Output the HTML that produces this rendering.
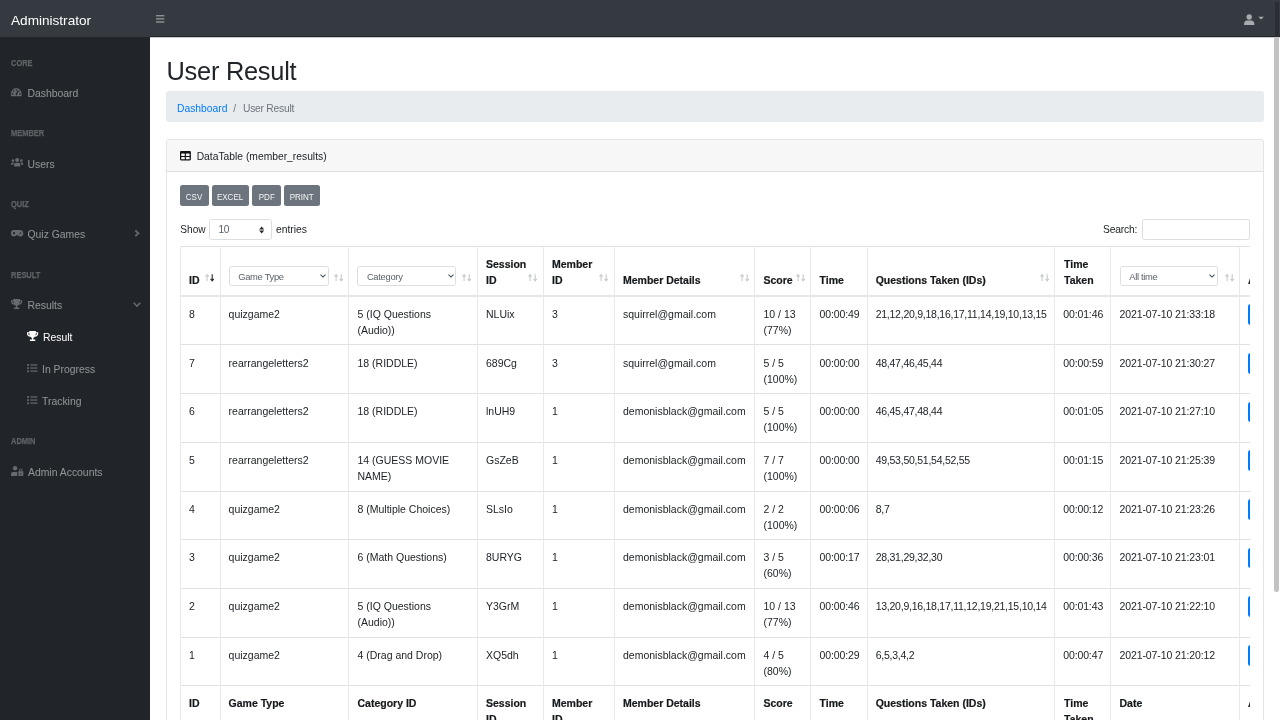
<!DOCTYPE html><html><head><meta charset="utf-8"><style>
*{box-sizing:border-box}
html,body{margin:0;padding:0;width:1280px;height:720px;overflow:hidden;background:#fff;font-family:"Liberation Sans",sans-serif;color:#212529}body{will-change:transform;position:relative}
.a{position:absolute;white-space:nowrap}
#nav{position:absolute;left:0;top:0;width:1280px;height:37px;background:#343a40}
#navline{position:absolute;left:150px;top:35.8px;width:1130px;height:1.3px;background:#212529}#navsh{position:absolute;left:150px;top:37px;width:1130px;height:1.3px;background:rgba(33,37,41,.25)}
#side{position:absolute;left:0;top:37.3px;width:150px;height:683px;background:#212529}
.sh{font-size:8.7px;font-weight:bold;color:#606366;-webkit-text-stroke:.25px #606366;line-height:12px;transform:scaleX(.86);transform-origin:0 0}
.sl{font-size:10.4px;color:rgba(255,255,255,.5);line-height:16px}
svg{position:absolute;overflow:visible}

.t{font-size:10.5px;line-height:16px;color:#212529}
.th{font-size:10.5px;line-height:16px;color:#16191c;font-weight:bold;-webkit-text-stroke:.2px #16191c}
.hl{position:absolute;background:#e8e9eb;height:1px}
.vl{position:absolute;background:#e8e9eb;width:1px}
.btn{position:absolute;background:#6c757d;border-radius:2.5px;color:#fff;line-height:21px;text-align:center}.btn span{display:inline-block;font-size:9.8px;line-height:20.6px;vertical-align:top;position:relative;top:1.3px;transform:scaleX(.82);margin:0 -10px;color:#f4f5f6}
.sel{position:absolute;border:1px solid #dcdfe2;border-radius:2.6px;background:#fff;height:20px;font-size:9.4px;line-height:18.5px;color:#5b6269;padding-left:8.5px;letter-spacing:-.3px}
</style></head><body><div id="nav"></div><div id="navline"></div><div id="navsh"></div><div id="side"></div>
<div class="a " style="left:11.00px;top:12.79px;font-size:13.6px;line-height:16px;color:#fff">Administrator</div>
<svg style="left:155px;top:14px" width="10" height="10" viewBox="0 0 10 10"><g fill="#a3a6a9"><rect x="1" y="1.2" width="8.3" height="1.15"/><rect x="1" y="4.3" width="8.3" height="1.15"/><rect x="1" y="7.4" width="8.3" height="1.15"/></g></svg>
<svg style="left:1243px;top:12px" width="24" height="16" viewBox="0 0 24 16"><g fill="#a8abae"><circle cx="6.2" cy="5" r="2.7"/><path d="M1 13 Q1 8.4 4 8.4 H8.4 Q11.4 8.4 11.4 13 Z"/><path d="M15.3 4.8 L20.9 4.8 L18.1 7.4 Z"/></g></svg>
<div class="a" style="left:1274.5px;top:2px;width:4.5px;height:35px;background:#2a2e33"></div>
<div class="a" style="left:1274.2px;top:38px;width:4.5px;height:554px;background:#c2c2c2;border-radius:0 0 2.2px 2.2px"></div>
<div class="a sh" style="left:11.00px;top:56.59px;">CORE</div>
<div class="a sh" style="left:11.00px;top:127.19px;">MEMBER</div>
<div class="a sh" style="left:11.00px;top:197.89px;">QUIZ</div>
<div class="a sh" style="left:11.00px;top:268.59px;">RESULT</div>
<div class="a sh" style="left:11.00px;top:434.99px;">ADMIN</div>
<div class="a sl" style="left:27.50px;top:85.80px;">Dashboard</div>
<div class="a sl" style="left:27.50px;top:156.50px;">Users</div>
<div class="a sl" style="left:27.50px;top:227.10px;">Quiz Games</div>
<div class="a sl" style="left:27.50px;top:297.80px;">Results</div>
<div class="a sl" style="left:43.00px;top:329.80px;color:#fff">Result</div>
<div class="a sl" style="left:42.00px;top:361.80px;">In Progress</div>
<div class="a sl" style="left:42.00px;top:393.80px;">Tracking</div>
<div class="a sl" style="left:28.00px;top:464.50px;">Admin Accounts</div>
<svg style="left:0;top:0" width="1" height="1"></svg>
<svg style="left:11px;top:87.8px" width="10.6" height="8.4" viewBox="0 0 10.6 8.4"><path d="M0 8.3 V5.6 A5.3 5.5 0 0 1 10.6 5.6 V8.3 Z" fill="#66696d"/><g fill="#212529"><circle cx="5.3" cy="1.9" r=".8"/><circle cx="2.6" cy="3.1" r=".8"/><circle cx="1.7" cy="5.9" r=".8"/><circle cx="8.9" cy="5.9" r=".8"/><circle cx="8" cy="3.1" r=".8"/><path d="M6.6 2.4 L7.5 2.8 L6 6.9 A1.1 1.1 0 0 1 4.4 6.6 Z"/></g></svg>
<svg style="left:10.7px;top:158.4px" width="12.4" height="8.8" viewBox="0 0 12.4 8.8"><g fill="#66696d"><circle cx="6.2" cy="2.1" r="2"/><circle cx="2" cy="2.6" r="1.3"/><circle cx="10.4" cy="2.6" r="1.3"/><path d="M3.1 8.6 V6.8 Q3.1 4.7 5 4.7 H7.4 Q9.3 4.7 9.3 6.8 V8.6 Z"/><path d="M0 6.4 Q0 4.6 1.6 4.6 H3.1 Q2.3 5.3 2.3 6.8 H0 Z"/><path d="M12.4 6.4 Q12.4 4.6 10.8 4.6 H9.3 Q10.1 5.3 10.1 6.8 H12.4 Z"/></g></svg>
<svg style="left:10.9px;top:230.3px" width="12.2" height="6.6" viewBox="0 0 12.2 6.6"><path d="M3.1 0 H9.1 A3.1 3.2 0 0 1 9.1 6.5 Q7.6 6.5 6.1 5.1 Q4.6 6.5 3.1 6.5 A3.1 3.2 0 0 1 3.1 0 Z" fill="#66696d"/><circle cx="3" cy="3.2" r="1.1" fill="#212529"/><path d="M8.2 4.6 L10.2 1.8" stroke="#212529" stroke-width="0.9"/></svg>
<svg style="left:10.75px;top:299px" width="11.2" height="10.2" viewBox="0 0 11.2 10.2"><path d="M2.3 0 H8.9 V1.2 H11.2 V2.4 Q11.2 5.2 7.8 5.8 Q7 6.8 6.3 7 V8.6 H8.3 V10.1 H2.9 V8.6 H4.9 V7 Q4.2 6.8 3.4 5.8 Q0 5.2 0 2.4 V1.2 H2.3 Z" fill="#66696d"/><g fill="#212529"><path d="M1.2 2.2 H2.3 Q2.4 3.6 2.9 4.5 Q1.3 4 1.2 2.2 Z"/><path d="M10 2.2 H8.9 Q8.8 3.6 8.3 4.5 Q9.9 4 10 2.2 Z"/></g></svg>
<svg style="left:26.75px;top:330.8px" width="11.2" height="10.2" viewBox="0 0 11.2 10.2"><path d="M2.3 0 H8.9 V1.2 H11.2 V2.4 Q11.2 5.2 7.8 5.8 Q7 6.8 6.3 7 V8.6 H8.3 V10.1 H2.9 V8.6 H4.9 V7 Q4.2 6.8 3.4 5.8 Q0 5.2 0 2.4 V1.2 H2.3 Z" fill="#ffffff"/><g fill="#212529"><path d="M1.2 2.2 H2.3 Q2.4 3.6 2.9 4.5 Q1.3 4 1.2 2.2 Z"/><path d="M10 2.2 H8.9 Q8.8 3.6 8.3 4.5 Q9.9 4 10 2.2 Z"/></g></svg>
<svg style="left:26.8px;top:364.0px" width="10.4" height="8.2" viewBox="0 0 10.4 8.2"><g fill="#595c60"><rect x="0" y="0" width="2" height="2"/><rect x="0" y="3.1" width="2" height="2"/><rect x="0" y="6.2" width="2" height="2"/><rect x="3.2" y="0.2" width="7.2" height="1.5"/><rect x="3.2" y="3.3" width="7.2" height="1.5"/><rect x="3.2" y="6.4" width="7.2" height="1.5"/></g></svg>
<svg style="left:26.8px;top:396.0px" width="10.4" height="8.2" viewBox="0 0 10.4 8.2"><g fill="#595c60"><rect x="0" y="0" width="2" height="2"/><rect x="0" y="3.1" width="2" height="2"/><rect x="0" y="6.2" width="2" height="2"/><rect x="3.2" y="0.2" width="7.2" height="1.5"/><rect x="3.2" y="3.3" width="7.2" height="1.5"/><rect x="3.2" y="6.4" width="7.2" height="1.5"/></g></svg>
<svg style="left:10.75px;top:465.7px" width="12.4" height="10" viewBox="0 0 12.4 10"><g fill="#66696d"><circle cx="4.1" cy="2.3" r="2.2"/><path d="M0 9.9 V7.7 Q0 6 1.8 6 H6.2 V9.9 Z"/><path d="M7.3 5.2 H12.3 V9.9 H7.3 Z"/><path d="M8.2 5.3 V4 A1.6 1.6 0 0 1 11.4 4 V5.3 H10.5 V4 A0.7 0.7 0 0 0 9.1 4 V5.3 Z"/></g><rect x="9.4" y="7" width=".9" height="1.5" fill="#212529"/></svg>
<svg style="left:133.5px;top:229px" width="6" height="8.5" viewBox="0 0 6 8.5"><path d="M1.3 1.3 L4.4 4.25 L1.3 7.2" fill="none" stroke="#66696d" stroke-width="1.8"/></svg>
<svg style="left:132.5px;top:302px" width="8" height="5.5" viewBox="0 0 8 5.5"><path d="M0.7 0.8 L4 4.2 L7.3 0.8" fill="none" stroke="#66696d" stroke-width="1.6"/></svg>
<div class="a " style="left:166.50px;top:56.40px;font-size:25.4px;line-height:30px;color:#212529;letter-spacing:-.25px">User Result</div>
<div class="a" style="left:166px;top:91px;width:1098px;height:31px;background:#e9ecef;border-radius:2.7px"></div>
<div class="a " style="left:177.00px;top:100.63px;font-size:10.3px;line-height:16px;color:#007bff">Dashboard</div>
<div class="a " style="left:233.20px;top:100.63px;font-size:10.3px;line-height:16px;color:#6c757d">/</div>
<div class="a " style="left:243.00px;top:100.63px;font-size:10.3px;line-height:16px;color:#6c757d;letter-spacing:-.25px">User Result</div>
<div class="a" style="left:166px;top:139px;width:1098px;height:600px;border:1px solid rgba(0,0,0,.1);border-radius:2.7px"></div>
<div class="a" style="left:167px;top:140px;width:1096px;height:32px;background:#f7f7f7;border-bottom:1px solid #dfdfdf;border-radius:2px 2px 0 0"></div>
<svg style="left:180px;top:151.2px" width="11" height="9.5" viewBox="0 0 11 9.5"><rect x="0" y="0" width="10.9" height="9.4" rx="1.1" fill="#111315"/><g fill="#f7f7f7"><rect x="1.2" y="2.6" width="3.6" height="2.4" rx=".4"/><rect x="5.9" y="2.6" width="3.7" height="2.4" rx=".4"/><rect x="1.2" y="6" width="3.6" height="2.3" rx=".4"/><rect x="5.9" y="6" width="3.7" height="2.3" rx=".4"/></g></svg>
<div class="a " style="left:196.70px;top:148.63px;font-size:10.3px;line-height:16px;color:#212529">DataTable (member_results)</div>
<div class="btn" style="left:180.1px;top:185.3px;width:28.5px;height:20.6px"><span>CSV</span></div>
<div class="btn" style="left:211.8px;top:185.3px;width:36.9px;height:20.6px"><span>EXCEL</span></div>
<div class="btn" style="left:252.2px;top:185.3px;width:28.4px;height:20.6px"><span>PDF</span></div>
<div class="btn" style="left:283.6px;top:185.3px;width:36.4px;height:20.6px"><span>PRINT</span></div>
<div class="a " style="left:180.30px;top:222.10px;font-size:10.1px;line-height:16px;color:#212529">Show</div>
<div class="sel" style="left:209.2px;top:219.3px;width:63.2px;height:20.3px;padding-left:8.3px;font-size:10.2px;line-height:20.5px;color:#5a6168">10</div>
<svg style="left:259.2px;top:226px" width="5.4" height="8" viewBox="0 0 5.4 8"><path d="M0.2 3.5 L2.7 0.6 L5.2 3.5 Z M0.2 4.6 L2.7 7.5 L5.2 4.6 Z" fill="#212529"/></svg>
<div class="a " style="left:276.00px;top:222.03px;font-size:10.3px;line-height:16px;color:#212529">entries</div>
<div class="a " style="left:1103.00px;top:222.03px;font-size:10.3px;letter-spacing:-.2px;line-height:16px;color:#212529">Search:</div>
<div class="sel" style="left:1142.3px;top:219px;width:107.5px;height:20.6px"></div>
<div class="a" style="left:180px;top:240px;width:1070px;height:480px;overflow:hidden">
<div class="hl" style="left:0px;top:5.50px;width:1070px;height:1px;background:#dee2e6"></div>
<div class="hl" style="left:0px;top:54.50px;width:1070px;height:2px;background:#e4e6e9"></div>
<div class="hl" style="left:0px;top:104.00px;width:1070px;height:1px;background:#dee2e6"></div>
<div class="hl" style="left:0px;top:153.00px;width:1070px;height:1px;background:#dee2e6"></div>
<div class="hl" style="left:0px;top:202.00px;width:1070px;height:1px;background:#dee2e6"></div>
<div class="hl" style="left:0px;top:251.00px;width:1070px;height:1px;background:#dee2e6"></div>
<div class="hl" style="left:0px;top:299.00px;width:1070px;height:1px;background:#dee2e6"></div>
<div class="hl" style="left:0px;top:348.00px;width:1070px;height:1px;background:#dee2e6"></div>
<div class="hl" style="left:0px;top:397.00px;width:1070px;height:1px;background:#dee2e6"></div>
<div class="hl" style="left:0px;top:445.00px;width:1070px;height:1px;background:#dee2e6"></div>
<div class="vl" style="left:0.00px;top:6px;height:480px"></div>
<div class="vl" style="left:39.70px;top:6px;height:480px"></div>
<div class="vl" style="left:168.40px;top:6px;height:480px"></div>
<div class="vl" style="left:297.10px;top:6px;height:480px"></div>
<div class="vl" style="left:362.70px;top:6px;height:480px"></div>
<div class="vl" style="left:433.90px;top:6px;height:480px"></div>
<div class="vl" style="left:574.40px;top:6px;height:480px"></div>
<div class="vl" style="left:630.20px;top:6px;height:480px"></div>
<div class="vl" style="left:686.50px;top:6px;height:480px"></div>
<div class="vl" style="left:874.00px;top:6px;height:480px"></div>
<div class="vl" style="left:930.00px;top:6px;height:480px"></div>
<div class="vl" style="left:1058.70px;top:6px;height:480px"></div>
<div class="a th" style="left:9.00px;top:31.56px;">ID</div>
<div class="a th" style="left:306.00px;top:15.56px;">Session</div>
<div class="a th" style="left:306.00px;top:31.56px;">ID</div>
<div class="a th" style="left:372.00px;top:15.56px;">Member</div>
<div class="a th" style="left:372.00px;top:31.56px;">ID</div>
<div class="a th" style="left:443.00px;top:31.56px;">Member Details</div>
<div class="a th" style="left:583.50px;top:31.56px;">Score</div>
<div class="a th" style="left:639.50px;top:31.56px;">Time</div>
<div class="a th" style="left:695.70px;top:31.56px;">Questions Taken (IDs)</div>
<div class="a th" style="left:884.00px;top:15.56px;">Time</div>
<div class="a th" style="left:884.00px;top:31.56px;">Taken</div>
<div class="a th" style="left:1068.00px;top:31.56px;">Action</div>
<div class="sel" style="left:48.7px;top:26.3px;width:99.9px;height:20.1px;line-height:20.8px">Game Type</div>
<svg style="left:139.6px;top:34.3px" width="6" height="4" viewBox="0 0 6 4"><path d="M0.5 0.6 L3 3.1 L5.5 0.6" fill="none" stroke="#495057" stroke-width="1.05"/></svg>
<div class="sel" style="left:177.4px;top:26.3px;width:99.1px;height:20.1px;line-height:20.8px">Category</div>
<svg style="left:267.5px;top:34.3px" width="6" height="4" viewBox="0 0 6 4"><path d="M0.5 0.6 L3 3.1 L5.5 0.6" fill="none" stroke="#495057" stroke-width="1.05"/></svg>
<div class="sel" style="left:939.7px;top:26.3px;width:98.3px;height:20.1px;line-height:20.8px">All time</div>
<svg style="left:1029.0px;top:34.3px" width="6" height="4" viewBox="0 0 6 4"><path d="M0.5 0.6 L3 3.1 L5.5 0.6" fill="none" stroke="#495057" stroke-width="1.05"/></svg>
<svg style="left:24.8px;top:33.6px" width="10" height="8" viewBox="0 0 10 8"><path d="M2.1 7.1 V1.2 M0.5 2.7 L2.1 0.7 L3.7 2.7" fill="none" stroke="#c9cbcd" stroke-width="1.1"/><path d="M7.2 0.3 V6.4 M5.6 4.9 L7.2 6.9 L8.8 4.9" fill="none" stroke="#2b2f33" stroke-width="1.15"/></svg>
<svg style="left:153.5px;top:33.6px" width="10" height="8" viewBox="0 0 10 8"><path d="M2.1 7.1 V1.2 M0.5 2.7 L2.1 0.7 L3.7 2.7" fill="none" stroke="#c9cbcd" stroke-width="1.1"/><path d="M7.2 0.3 V6.4 M5.6 4.9 L7.2 6.9 L8.8 4.9" fill="none" stroke="#c9cbcd" stroke-width="1.15"/></svg>
<svg style="left:281.8px;top:33.6px" width="10" height="8" viewBox="0 0 10 8"><path d="M2.1 7.1 V1.2 M0.5 2.7 L2.1 0.7 L3.7 2.7" fill="none" stroke="#c9cbcd" stroke-width="1.1"/><path d="M7.2 0.3 V6.4 M5.6 4.9 L7.2 6.9 L8.8 4.9" fill="none" stroke="#c9cbcd" stroke-width="1.15"/></svg>
<svg style="left:348.3px;top:33.6px" width="10" height="8" viewBox="0 0 10 8"><path d="M2.1 7.1 V1.2 M0.5 2.7 L2.1 0.7 L3.7 2.7" fill="none" stroke="#c9cbcd" stroke-width="1.1"/><path d="M7.2 0.3 V6.4 M5.6 4.9 L7.2 6.9 L8.8 4.9" fill="none" stroke="#c9cbcd" stroke-width="1.15"/></svg>
<svg style="left:419.0px;top:33.6px" width="10" height="8" viewBox="0 0 10 8"><path d="M2.1 7.1 V1.2 M0.5 2.7 L2.1 0.7 L3.7 2.7" fill="none" stroke="#c9cbcd" stroke-width="1.1"/><path d="M7.2 0.3 V6.4 M5.6 4.9 L7.2 6.9 L8.8 4.9" fill="none" stroke="#c9cbcd" stroke-width="1.15"/></svg>
<svg style="left:559.7px;top:33.6px" width="10" height="8" viewBox="0 0 10 8"><path d="M2.1 7.1 V1.2 M0.5 2.7 L2.1 0.7 L3.7 2.7" fill="none" stroke="#c9cbcd" stroke-width="1.1"/><path d="M7.2 0.3 V6.4 M5.6 4.9 L7.2 6.9 L8.8 4.9" fill="none" stroke="#c9cbcd" stroke-width="1.15"/></svg>
<svg style="left:616.0px;top:33.6px" width="10" height="8" viewBox="0 0 10 8"><path d="M2.1 7.1 V1.2 M0.5 2.7 L2.1 0.7 L3.7 2.7" fill="none" stroke="#c9cbcd" stroke-width="1.1"/><path d="M7.2 0.3 V6.4 M5.6 4.9 L7.2 6.9 L8.8 4.9" fill="none" stroke="#c9cbcd" stroke-width="1.15"/></svg>
<svg style="left:860.4px;top:33.6px" width="10" height="8" viewBox="0 0 10 8"><path d="M2.1 7.1 V1.2 M0.5 2.7 L2.1 0.7 L3.7 2.7" fill="none" stroke="#c9cbcd" stroke-width="1.1"/><path d="M7.2 0.3 V6.4 M5.6 4.9 L7.2 6.9 L8.8 4.9" fill="none" stroke="#c9cbcd" stroke-width="1.15"/></svg>
<svg style="left:1044.5px;top:33.6px" width="10" height="8" viewBox="0 0 10 8"><path d="M2.1 7.1 V1.2 M0.5 2.7 L2.1 0.7 L3.7 2.7" fill="none" stroke="#c9cbcd" stroke-width="1.1"/><path d="M7.2 0.3 V6.4 M5.6 4.9 L7.2 6.9 L8.8 4.9" fill="none" stroke="#c9cbcd" stroke-width="1.15"/></svg>
<div class="a t" style="left:9.00px;top:65.86px;">8</div>
<div class="a t" style="left:48.60px;top:65.86px;">quizgame2</div>
<div class="a t" style="left:177.50px;top:65.86px;">5 (IQ Questions</div>
<div class="a t" style="left:177.50px;top:81.86px;">(Audio))</div>
<div class="a t" style="left:306.00px;top:65.86px;">NLUix</div>
<div class="a t" style="left:372.00px;top:65.86px;">3</div>
<div class="a t" style="left:443.00px;top:65.86px;">squirrel@gmail.com</div>
<div class="a t" style="left:583.50px;top:65.86px;">10 / 13</div>
<div class="a t" style="left:583.50px;top:81.86px;">(77%)</div>
<div class="a t" style="left:639.50px;top:65.86px;letter-spacing:-.12px">00:00:49</div>
<div class="a t" style="left:695.70px;top:65.86px;letter-spacing:-.25px">21,12,20,9,18,16,17,11,14,19,10,13,15</div>
<div class="a t" style="left:883.20px;top:65.86px;letter-spacing:-.12px">00:01:46</div>
<div class="a t" style="left:939.50px;top:65.86px;letter-spacing:-.1px">2021-07-10 21:33:18</div>
<div class="a" style="left:1068px;top:64.20px;width:40px;height:20.8px;background:#007bff;border-radius:2.5px"></div>
<div class="a t" style="left:9.00px;top:114.53px;">7</div>
<div class="a t" style="left:48.60px;top:114.53px;">rearrangeletters2</div>
<div class="a t" style="left:177.50px;top:114.53px;">18 (RIDDLE)</div>
<div class="a t" style="left:306.00px;top:114.53px;">689Cg</div>
<div class="a t" style="left:372.00px;top:114.53px;">3</div>
<div class="a t" style="left:443.00px;top:114.53px;">squirrel@gmail.com</div>
<div class="a t" style="left:583.50px;top:114.53px;">5 / 5</div>
<div class="a t" style="left:583.50px;top:130.53px;">(100%)</div>
<div class="a t" style="left:639.50px;top:114.53px;letter-spacing:-.12px">00:00:00</div>
<div class="a t" style="left:695.70px;top:114.53px;letter-spacing:-.25px">48,47,46,45,44</div>
<div class="a t" style="left:883.20px;top:114.53px;letter-spacing:-.12px">00:00:59</div>
<div class="a t" style="left:939.50px;top:114.53px;letter-spacing:-.1px">2021-07-10 21:30:27</div>
<div class="a" style="left:1068px;top:112.87px;width:40px;height:20.8px;background:#007bff;border-radius:2.5px"></div>
<div class="a t" style="left:9.00px;top:163.20px;">6</div>
<div class="a t" style="left:48.60px;top:163.20px;">rearrangeletters2</div>
<div class="a t" style="left:177.50px;top:163.20px;">18 (RIDDLE)</div>
<div class="a t" style="left:306.00px;top:163.20px;">lnUH9</div>
<div class="a t" style="left:372.00px;top:163.20px;">1</div>
<div class="a t" style="left:443.00px;top:163.20px;">demonisblack@gmail.com</div>
<div class="a t" style="left:583.50px;top:163.20px;">5 / 5</div>
<div class="a t" style="left:583.50px;top:179.20px;">(100%)</div>
<div class="a t" style="left:639.50px;top:163.20px;letter-spacing:-.12px">00:00:00</div>
<div class="a t" style="left:695.70px;top:163.20px;letter-spacing:-.25px">46,45,47,48,44</div>
<div class="a t" style="left:883.20px;top:163.20px;letter-spacing:-.12px">00:01:05</div>
<div class="a t" style="left:939.50px;top:163.20px;letter-spacing:-.1px">2021-07-10 21:27:10</div>
<div class="a" style="left:1068px;top:161.54px;width:40px;height:20.8px;background:#007bff;border-radius:2.5px"></div>
<div class="a t" style="left:9.00px;top:211.87px;">5</div>
<div class="a t" style="left:48.60px;top:211.87px;">rearrangeletters2</div>
<div class="a t" style="left:177.50px;top:211.87px;">14 (GUESS MOVIE</div>
<div class="a t" style="left:177.50px;top:227.87px;">NAME)</div>
<div class="a t" style="left:306.00px;top:211.87px;">GsZeB</div>
<div class="a t" style="left:372.00px;top:211.87px;">1</div>
<div class="a t" style="left:443.00px;top:211.87px;">demonisblack@gmail.com</div>
<div class="a t" style="left:583.50px;top:211.87px;">7 / 7</div>
<div class="a t" style="left:583.50px;top:227.87px;">(100%)</div>
<div class="a t" style="left:639.50px;top:211.87px;letter-spacing:-.12px">00:00:00</div>
<div class="a t" style="left:695.70px;top:211.87px;letter-spacing:-.25px">49,53,50,51,54,52,55</div>
<div class="a t" style="left:883.20px;top:211.87px;letter-spacing:-.12px">00:01:15</div>
<div class="a t" style="left:939.50px;top:211.87px;letter-spacing:-.1px">2021-07-10 21:25:39</div>
<div class="a" style="left:1068px;top:210.21px;width:40px;height:20.8px;background:#007bff;border-radius:2.5px"></div>
<div class="a t" style="left:9.00px;top:260.54px;">4</div>
<div class="a t" style="left:48.60px;top:260.54px;">quizgame2</div>
<div class="a t" style="left:177.50px;top:260.54px;">8 (Multiple Choices)</div>
<div class="a t" style="left:306.00px;top:260.54px;">SLsIo</div>
<div class="a t" style="left:372.00px;top:260.54px;">1</div>
<div class="a t" style="left:443.00px;top:260.54px;">demonisblack@gmail.com</div>
<div class="a t" style="left:583.50px;top:260.54px;">2 / 2</div>
<div class="a t" style="left:583.50px;top:276.54px;">(100%)</div>
<div class="a t" style="left:639.50px;top:260.54px;letter-spacing:-.12px">00:00:06</div>
<div class="a t" style="left:695.70px;top:260.54px;letter-spacing:-.25px">8,7</div>
<div class="a t" style="left:883.20px;top:260.54px;letter-spacing:-.12px">00:00:12</div>
<div class="a t" style="left:939.50px;top:260.54px;letter-spacing:-.1px">2021-07-10 21:23:26</div>
<div class="a" style="left:1068px;top:258.88px;width:40px;height:20.8px;background:#007bff;border-radius:2.5px"></div>
<div class="a t" style="left:9.00px;top:309.21px;">3</div>
<div class="a t" style="left:48.60px;top:309.21px;">quizgame2</div>
<div class="a t" style="left:177.50px;top:309.21px;">6 (Math Questions)</div>
<div class="a t" style="left:306.00px;top:309.21px;">8URYG</div>
<div class="a t" style="left:372.00px;top:309.21px;">1</div>
<div class="a t" style="left:443.00px;top:309.21px;">demonisblack@gmail.com</div>
<div class="a t" style="left:583.50px;top:309.21px;">3 / 5</div>
<div class="a t" style="left:583.50px;top:325.21px;">(60%)</div>
<div class="a t" style="left:639.50px;top:309.21px;letter-spacing:-.12px">00:00:17</div>
<div class="a t" style="left:695.70px;top:309.21px;letter-spacing:-.25px">28,31,29,32,30</div>
<div class="a t" style="left:883.20px;top:309.21px;letter-spacing:-.12px">00:00:36</div>
<div class="a t" style="left:939.50px;top:309.21px;letter-spacing:-.1px">2021-07-10 21:23:01</div>
<div class="a" style="left:1068px;top:307.55px;width:40px;height:20.8px;background:#007bff;border-radius:2.5px"></div>
<div class="a t" style="left:9.00px;top:357.88px;">2</div>
<div class="a t" style="left:48.60px;top:357.88px;">quizgame2</div>
<div class="a t" style="left:177.50px;top:357.88px;">5 (IQ Questions</div>
<div class="a t" style="left:177.50px;top:373.88px;">(Audio))</div>
<div class="a t" style="left:306.00px;top:357.88px;">Y3GrM</div>
<div class="a t" style="left:372.00px;top:357.88px;">1</div>
<div class="a t" style="left:443.00px;top:357.88px;">demonisblack@gmail.com</div>
<div class="a t" style="left:583.50px;top:357.88px;">10 / 13</div>
<div class="a t" style="left:583.50px;top:373.88px;">(77%)</div>
<div class="a t" style="left:639.50px;top:357.88px;letter-spacing:-.12px">00:00:46</div>
<div class="a t" style="left:695.70px;top:357.88px;letter-spacing:-.25px">13,20,9,16,18,17,11,12,19,21,15,10,14</div>
<div class="a t" style="left:883.20px;top:357.88px;letter-spacing:-.12px">00:01:43</div>
<div class="a t" style="left:939.50px;top:357.88px;letter-spacing:-.1px">2021-07-10 21:22:10</div>
<div class="a" style="left:1068px;top:356.22px;width:40px;height:20.8px;background:#007bff;border-radius:2.5px"></div>
<div class="a t" style="left:9.00px;top:406.55px;">1</div>
<div class="a t" style="left:48.60px;top:406.55px;">quizgame2</div>
<div class="a t" style="left:177.50px;top:406.55px;">4 (Drag and Drop)</div>
<div class="a t" style="left:306.00px;top:406.55px;">XQ5dh</div>
<div class="a t" style="left:372.00px;top:406.55px;">1</div>
<div class="a t" style="left:443.00px;top:406.55px;">demonisblack@gmail.com</div>
<div class="a t" style="left:583.50px;top:406.55px;">4 / 5</div>
<div class="a t" style="left:583.50px;top:422.55px;">(80%)</div>
<div class="a t" style="left:639.50px;top:406.55px;letter-spacing:-.12px">00:00:29</div>
<div class="a t" style="left:695.70px;top:406.55px;letter-spacing:-.25px">6,5,3,4,2</div>
<div class="a t" style="left:883.20px;top:406.55px;letter-spacing:-.12px">00:00:47</div>
<div class="a t" style="left:939.50px;top:406.55px;letter-spacing:-.1px">2021-07-10 21:20:12</div>
<div class="a" style="left:1068px;top:404.89px;width:40px;height:20.8px;background:#007bff;border-radius:2.5px"></div>
<div class="a th" style="left:9.00px;top:454.86px;">ID</div>
<div class="a th" style="left:48.60px;top:454.86px;">Game Type</div>
<div class="a th" style="left:177.50px;top:454.86px;">Category ID</div>
<div class="a th" style="left:306.00px;top:454.86px;">Session</div>
<div class="a th" style="left:372.00px;top:454.86px;">Member</div>
<div class="a th" style="left:443.00px;top:454.86px;">Member Details</div>
<div class="a th" style="left:583.50px;top:454.86px;">Score</div>
<div class="a th" style="left:639.50px;top:454.86px;">Time</div>
<div class="a th" style="left:695.70px;top:454.86px;">Questions Taken (IDs)</div>
<div class="a th" style="left:884.00px;top:454.86px;">Time</div>
<div class="a th" style="left:939.50px;top:454.86px;">Date</div>
<div class="a th" style="left:1068.00px;top:454.86px;">Action</div>
<div class="a th" style="left:306.00px;top:470.86px;">ID</div>
<div class="a th" style="left:372.00px;top:470.86px;">ID</div>
<div class="a th" style="left:884.00px;top:470.86px;">Taken</div>
</div></body></html>
